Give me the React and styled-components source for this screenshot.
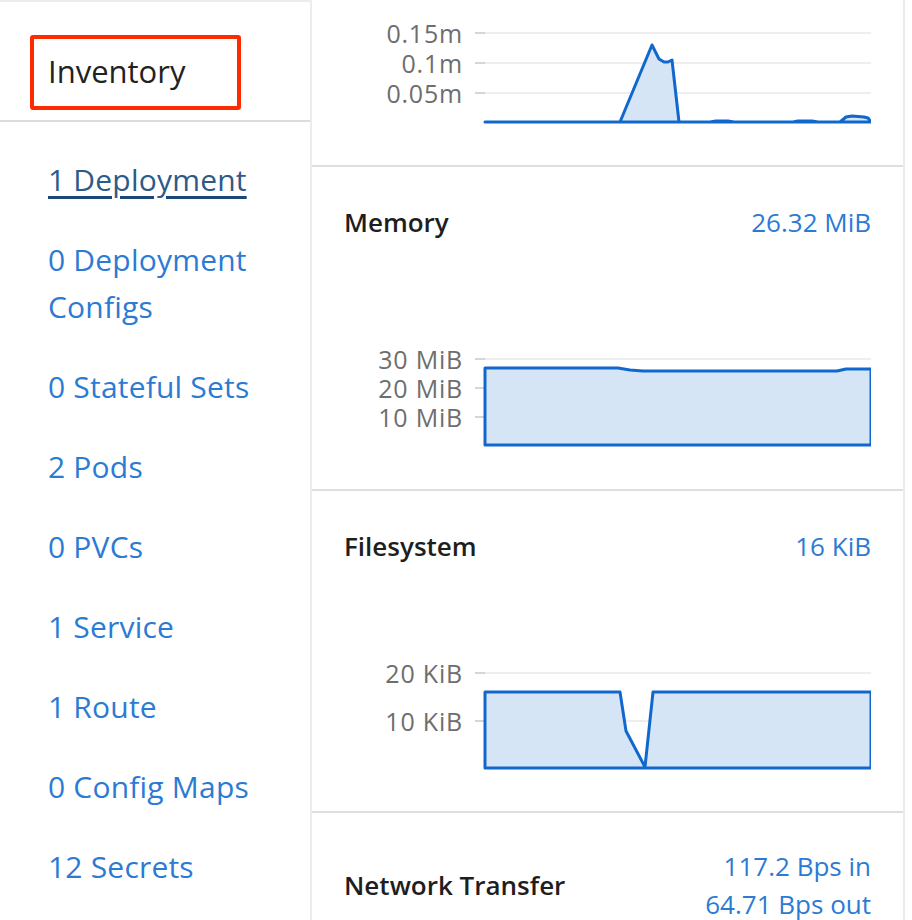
import React from "react";
import styled, { createGlobalStyle } from "styled-components";

const GlobalStyle = createGlobalStyle`
  body {
    margin: 0;
    background: #fff;
    font-family: "Open Sans", "Liberation Sans", sans-serif;
    color: #151515;
  }
`;

const Page = styled.div`
  display: flex;
  width: 912px;
  height: 920px;
  overflow: hidden;
  background: #fff;
`;

const Sidebar = styled.aside`
  width: 310px;
  flex-shrink: 0;
  border-top: 2px solid #ececec;
  border-right: 2px solid #ececec;
`;

const SidebarHeader = styled.div`
  height: 85px;
  padding: 33px 0 0 30px;
  border-bottom: 2px solid #dcdcdc;
`;

const Highlight = styled.div`
  display: flex;
  align-items: center;
  box-sizing: border-box;
  width: 211px;
  height: 75px;
  padding: 0 0 4px 14px;
  border: 4px solid #ff2a00;
  border-radius: 3px;
`;

const Heading = styled.h2`
  margin: 0;
  font-size: 31px;
  line-height: 40px;
  font-weight: 500;
  color: #222;
`;

const LinkList = styled.ul`
  list-style: none;
  margin: 0;
  padding: 34px 0 0 48px;
  display: flex;
  flex-direction: column;
  gap: 33px;
`;

const Link = styled.a`
  font-size: 30px;
  line-height: 47px;
  letter-spacing: 0.2px;
  color: ${(p) => (p.$active ? "#2d5a88" : "#2b7bd4")};
  text-decoration: ${(p) => (p.$active ? "underline" : "none")};
  text-decoration-color: #1b4878;
  text-decoration-thickness: 3px;
  text-underline-offset: 5px;
  cursor: pointer;
`;

const Main = styled.main`
  width: 591px;
  flex-shrink: 0;
  border-right: 2px solid #ebebeb;
`;

const Card = styled.section`
  box-sizing: border-box;
  height: ${(p) => p.$height}px;
  padding: ${(p) => p.$padTop || 0}px 32px 0;
  border-bottom: 2px solid #dedede;
`;

const CardHeader = styled.div`
  display: flex;
  justify-content: space-between;
  align-items: center;
`;

const CardTitle = styled.h3`
  margin: 0;
  font-size: 26px;
  line-height: 38px;
  font-weight: 600;
  color: #1e1e1e;
`;

const CardValue = styled.div`
  font-size: 26px;
  line-height: 38px;
  color: #2b7bd4;
  text-align: right;
`;

const ChartSvg = styled.svg`
  display: block;
  width: 527px;
`;

const AxisLabel = styled.text`
  font-size: 25px;
  letter-spacing: 0.8px;
  fill: #6e6e6e;
  font-family: "Open Sans", "Liberation Sans", sans-serif;
`;

function Chart({ top, height, ticks, points }) {
  const d = "M" + points.map((p) => p.join(",")).join(" L") + " Z";
  return (
    <ChartSvg height={height}>
      <g transform={`translate(-344, ${-top})`}>
        {ticks.map((t) => (
          <g key={t.label}>
            <line x1={485} x2={871} y1={t.y} y2={t.y} stroke="#eeeeee" strokeWidth="2" />
            <line x1={475} x2={485} y1={t.y} y2={t.y} stroke="#d6d6d6" strokeWidth="2" />
            <AxisLabel x={463} y={t.y} textAnchor="end" dominantBaseline="central">
              {t.label}
            </AxisLabel>
          </g>
        ))}
        <path d={d} fill="#d6e5f6" stroke="#1068cd" strokeWidth="3" strokeLinejoin="round" />
      </g>
    </ChartSvg>
  );
}

const links = [
  "1 Deployment",
  "0 Deployment Configs",
  "0 Stateful Sets",
  "2 Pods",
  "0 PVCs",
  "1 Service",
  "1 Route",
  "0 Config Maps",
  "12 Secrets",
];

const cpuPoints = [
  [485, 122], [620, 122], [652, 45], [659, 59], [664, 62], [668, 62], [672, 60],
  [679, 122], [710, 122], [716, 121], [728, 121], [734, 122], [793, 122],
  [798, 121], [812, 121], [818, 122], [840, 122], [846, 117], [852, 116],
  [864, 117], [868, 118], [871, 122],
];

const memoryPoints = [
  [485, 445], [485, 368], [618, 368], [630, 370], [643, 371], [837, 371],
  [846, 369], [871, 369], [871, 445],
];

const fsPoints = [
  [485, 768], [485, 692], [620, 692], [626, 731], [645, 767], [653, 692],
  [871, 692], [871, 768],
];

export default function App() {
  return (
    <>
      <GlobalStyle />
      <Page>
        <Sidebar>
          <SidebarHeader>
            <Highlight>
              <Heading>Inventory</Heading>
            </Highlight>
          </SidebarHeader>
          <LinkList>
            {links.map((l, i) => (
              <li key={l}>
                <Link $active={i === 0}>{l}</Link>
              </li>
            ))}
          </LinkList>
        </Sidebar>
        <Main>
          <Card $height={167}>
            <Chart
              top={0}
              height={165}
              ticks={[
                { label: "0.15m", y: 33 },
                { label: "0.1m", y: 63 },
                { label: "0.05m", y: 93 },
              ]}
              points={cpuPoints}
            />
          </Card>
          <Card $height={324} $padTop={36}>
            <CardHeader>
              <CardTitle>Memory</CardTitle>
              <CardValue>26.32 MiB</CardValue>
            </CardHeader>
            <Chart
              top={241}
              height={248}
              ticks={[
                { label: "30 MiB", y: 359 },
                { label: "20 MiB", y: 388 },
                { label: "10 MiB", y: 417 },
              ]}
              points={memoryPoints}
            />
          </Card>
          <Card $height={322} $padTop={36}>
            <CardHeader>
              <CardTitle>Filesystem</CardTitle>
              <CardValue>16 KiB</CardValue>
            </CardHeader>
            <Chart
              top={565}
              height={246}
              ticks={[
                { label: "20 KiB", y: 673 },
                { label: "10 KiB", y: 721 },
              ]}
              points={fsPoints}
            />
          </Card>
          <Card $height={120} $padTop={34}>
            <CardHeader>
              <CardTitle>Network Transfer</CardTitle>
              <CardValue>
                117.2 Bps in
                <br />
                64.71 Bps out
              </CardValue>
            </CardHeader>
          </Card>
        </Main>
      </Page>
    </>
  );
}
